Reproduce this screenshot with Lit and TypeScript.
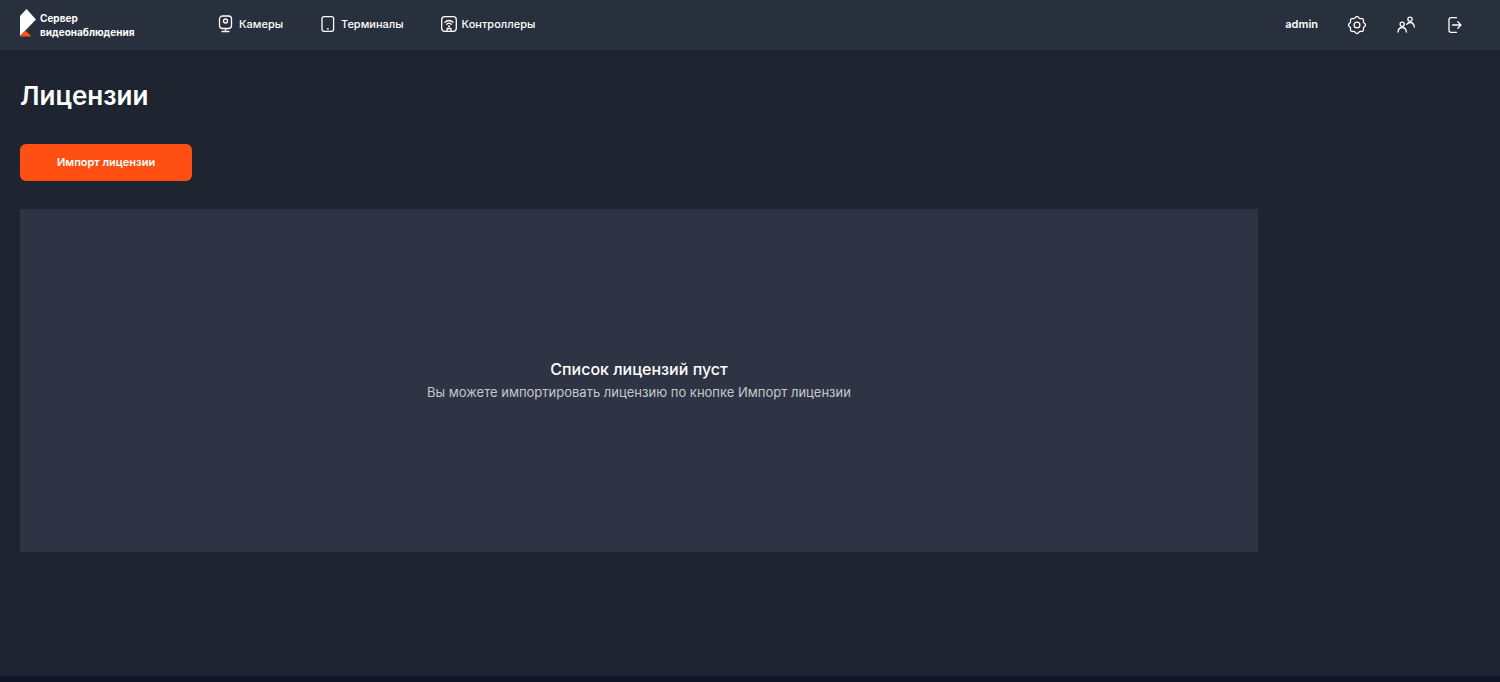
import { LitElement, html, css, svg } from "lit";
import { customElement } from "lit/decorators.js";

const icon = (body: unknown) => html`<svg class="icon" viewBox="0 0 20 20" aria-hidden="true">${body}</svg>`;

const cameraIcon = icon(svg`
  <rect x="3.5" y="2" width="12" height="12.5" rx="3"></rect>
  <circle cx="9.5" cy="7" r="2"></circle>
  <path d="M9.5 14.5v3M6 17.5h7"></path>`);

const terminalIcon = icon(svg`
  <rect x="4" y="2.7" width="11.6" height="14.6" rx="2"></rect>
  <path d="M9.3 14.8h1"></path>`);

const controllerIcon = icon(svg`
  <rect x="2.7" y="2.7" width="14.6" height="14.6" rx="3"></rect>
  <path d="M6 8.3c2.2-2.4 5.8-2.4 8 0M7.8 10.2c1.2-1.2 3.2-1.2 4.4 0"></path>
  <path d="M8 17v-1.7q0-.8.8-.8h2.4q.8 0 .8.8V17"></path>
  <circle class="dot" cx="10" cy="12.2" r="1"></circle>`);

const lobes = (): string => {
  const points: string[] = [];
  for (let i = 0; i <= 96; i++) {
    const a = (i / 96) * Math.PI * 2;
    const r = 7.8 + 0.7 * Math.cos(8 * a);
    points.push(`${(10 + r * Math.cos(a)).toFixed(2)} ${(10 + r * Math.sin(a)).toFixed(2)}`);
  }
  return `M${points.join("L")}Z`;
};

const settingsIcon = icon(svg`
  <path d=${lobes()}></path>
  <circle cx="10" cy="10" r="2.9"></circle>`);

const usersIcon = icon(svg`
  <circle cx="6.2" cy="9.2" r="2.1"></circle>
  <path d="M2 17c.3-2.8 2-4.5 4.2-4.5s3.9 1.7 4.2 4.5"></path>
  <circle cx="14" cy="4.2" r="2.1"></circle>
  <path d="M10.8 9.3c.8-1.2 1.9-1.8 3.2-1.8 2.3 0 4 1.7 4.3 4.5"></path>`);

const exitIcon = icon(svg`
  <path d="M11.5 2.7H6a2 2 0 0 0-2 2v10.6a2 2 0 0 0 2 2h5.5"></path>
  <path d="M7.5 10h8.3M12.8 6.8 16 10l-3.2 3.2"></path>`);

@customElement("app-root")
export class AppRoot extends LitElement {
  static styles = css`
    :host {
      display: flex;
      flex-direction: column;
      min-height: 100vh;
      background: #1e2531;
      color: #fff;
      font-family: Inter, "Liberation Sans", sans-serif;
      font-size: 11px;
      line-height: 16px;
      font-weight: 500;
    }
    a { color: inherit; text-decoration: none; }
    button { font: inherit; color: inherit; border: 0; background: none; padding: 0; cursor: pointer; }
    .header {
      display: flex;
      align-items: center;
      justify-content: space-between;
      height: 50px;
      padding: 0 35px 0 20px;
      background: #282f3d;
    }
    .left { display: flex; align-items: center; }
    .brand {
      display: flex;
      align-items: center;
      gap: 4px;
      min-width: 196px;
      font-size: 10px;
      line-height: 14px;
      font-weight: 700;
    }
    .mark { width: 16px; height: 28px; margin-bottom: 4px; flex: none; }
    .nav { display: flex; gap: 35px; padding-bottom: 2px; }
    .link { display: flex; align-items: center; gap: 3px; }
    .icon {
      display: block;
      width: 20px;
      height: 20px;
      fill: none;
      stroke: #fff;
      stroke-width: 1.3;
      stroke-linecap: round;
      stroke-linejoin: round;
    }
    .dot { fill: #fff; stroke: none; }
    .tools { display: flex; align-items: center; gap: 29px; }
    .user { font-weight: 600; padding-bottom: 2px; }
    .main { flex: 1; padding: 28px 20px; }
    .title { margin: 0; font-size: 26px; line-height: 36px; font-weight: 600; }
    .import {
      display: block;
      margin: 30px 0 28px;
      padding: 10px 37px 11px;
      border-radius: 6px;
      background: #ff4f12;
      font-weight: 600;
    }
    .panel {
      display: flex;
      flex-direction: column;
      align-items: center;
      justify-content: center;
      box-sizing: border-box;
      max-width: 1238px;
      min-height: 343px;
      padding-bottom: 2px;
      background: #2e3443;
      text-align: center;
    }
    .empty { margin: 0; font-size: 16px; line-height: 24px; font-weight: 500; }
    .hint { margin: 0; font-size: 13px; line-height: 22px; font-weight: 400; color: #c5c8ce; }
    .footer { height: 6px; background: #101627; }
  `;

  render() {
    return html`
      <header class="header">
        <div class="left">
          <a class="brand" href="#">
            <svg class="mark" viewBox="0 0 16 28" aria-hidden="true">
              <path fill="#fff" d="M0 7 6.5 0 16 10.5 0 27Z"></path>
              <path fill="#ff4f12" d="M0 27.5 5.5 21.5 11.5 27.5Z"></path>
            </svg>
            <span>Сервер<br />видеонаблюдения</span>
          </a>
          <nav class="nav">
            <a class="link" href="#cameras">${cameraIcon}<span>Камеры</span></a>
            <a class="link" href="#terminals">${terminalIcon}<span>Терминалы</span></a>
            <a class="link" href="#controllers">${controllerIcon}<span>Контроллеры</span></a>
          </nav>
        </div>
        <div class="tools">
          <span class="user">admin</span>
          <button type="button" aria-label="Настройки">${settingsIcon}</button>
          <button type="button" aria-label="Пользователи">${usersIcon}</button>
          <button type="button" aria-label="Выход">${exitIcon}</button>
        </div>
      </header>
      <main class="main">
        <h1 class="title">Лицензии</h1>
        <button class="import" type="button">Импорт лицензии</button>
        <section class="panel">
          <h2 class="empty">Список лицензий пуст</h2>
          <p class="hint">Вы можете импортировать лицензию по кнопке Импорт лицензии</p>
        </section>
      </main>
      <footer class="footer"></footer>
    `;
  }
}
